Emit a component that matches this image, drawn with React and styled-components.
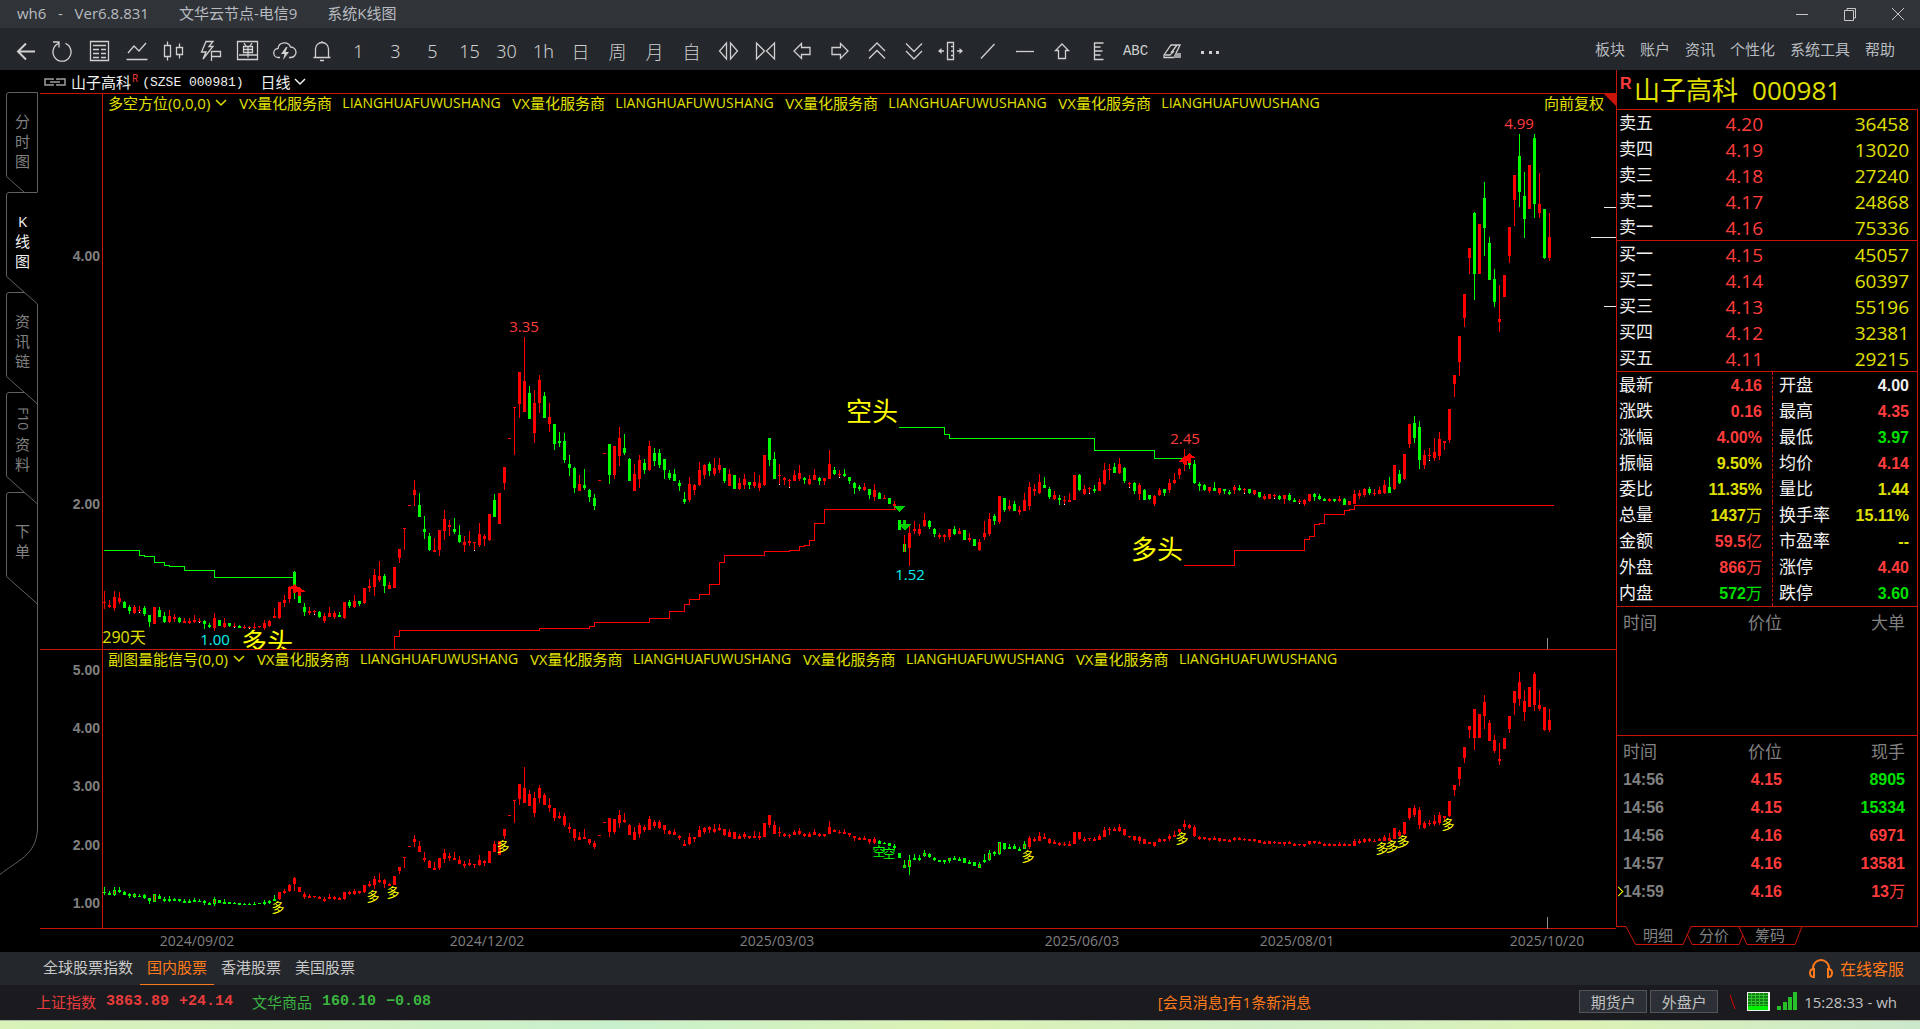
import styled, { createGlobalStyle, css } from "styled-components";

const cjk = `"Noto Sans CJK SC", sans-serif`;
const uiFont = `"Open Sans", ${cjk}`;
const boldFont = `"Liberation Sans", ${cjk}`;
const monoFont = `"Liberation Mono", ${cjk}`;

const color = {
  line: "#c8140a",
  red: "#ff3c3c",
  green: "#00e000",
  yellow: "#e0e000",
  white: "#f0f0f0",
  gray: "#808080",
  orange: "#ff7a1a",
};

const GlobalStyle = createGlobalStyle`
  *{
    box-sizing:border-box;
  }
  body{
    margin:0;
    background:#000;
    color:#f0f0f0;
    font-family:${uiFont};
    font-size:15px;
  }
  button{
    border:0;
    padding:0;
    background:none;
    color:inherit;
    font:inherit;
    cursor:pointer;
  }
  a{
    color:inherit;
    text-decoration:none;
  }
`;

/* ---------- data ---------- */

// high, body top, body bottom, low, kind (r up, g down, w flat, h hollow)
const candleText = `
591 602 603 609 r,600 605 607 608 r,591 597 608 611 r,592 598 602 604 r,601 602 608 608 g
605 607 611 614 g,605 607 613 614 r,606 610 611 613 w,606 608 614 616 g,615 615 622 627 g
607 607 624 624 r,607 610 617 617 g,612 616 622 623 g,610 616 622 623 r,614 617 619 622 r
617 618 622 623 g,618 621 623 623 r,618 621 623 624 r,615 620 622 623 r,618 621 622 623 w
620 621 624 629 g,623 625 627 628 g,613 618 628 631 r,620 620 626 626 g,618 623 627 628 r
623 623 626 627 g,623 626 627 628 w,625 626 628 628 g,625 627 628 629 r,626 627 628 629 w
623 627 628 629 r,626 626 627 628 r,620 623 628 630 r,620 621 626 627 r,608 616 618 618 r
602 602 618 619 r,595 600 603 607 r,586 587 599 603 r,571 572 585 599 g,591 592 603 603 g
603 607 612 616 g,607 611 613 615 r,610 611 612 615 w,611 612 617 618 g,613 616 621 623 r
607 613 617 617 r,611 613 617 619 r,612 615 617 617 g,602 602 618 619 r,600 602 606 608 g
595 601 607 608 r,601 601 604 606 g,588 588 603 604 r,579 586 588 592 r,569 575 587 596 r
561 576 580 582 r,574 576 586 593 g,582 585 589 589 r,567 567 588 588 r,549 549 558 563 r
528 528 529 550 r,505 505 506 506 r,480 490 495 506 r,493 505 517 517 g,516 529 532 539 g
533 536 550 551 g,538 550 552 552 r,530 530 550 556 r,510 519 531 540 r,520 525 527 536 r
518 529 532 534 g,525 535 542 543 g,536 542 545 552 r,531 541 543 546 r,542 542 543 551 w
523 534 545 547 r,534 536 539 546 r,514 514 540 541 r,494 500 517 517 g,493 493 524 524 r
467 467 483 490 r,438 438 439 439 r,407 407 408 455 r,372 372 404 418 r,337 381 412 412 r
386 393 419 419 g,390 403 433 443 r,375 380 403 413 r,392 396 418 418 g,403 417 424 432 r
424 424 444 450 g,432 441 443 447 g,433 441 460 463 g,455 464 468 476 g,467 468 488 493 g
475 484 491 491 r,469 485 488 490 g,489 490 497 502 g,494 498 506 510 g,480 480 481 481 r
453 453 454 454 r,444 444 475 484 g,446 446 475 479 r,427 438 456 466 r,434 448 453 455 g
458 459 481 481 g,464 474 491 491 r,455 460 479 488 r,459 463 470 474 g,441 446 470 471 r
448 453 461 466 g,449 453 465 468 g,459 459 470 479 g,470 473 478 480 g,469 474 481 481 g
480 483 486 491 g,492 499 502 504 g,477 484 500 502 r,484 485 490 495 r,462 470 485 486 r
464 465 475 479 r,462 464 471 476 g,458 468 474 476 r,458 465 470 473 r,468 468 481 483 g
469 474 486 486 r,475 475 489 489 g,478 483 489 490 r,474 479 485 489 r,482 482 485 489 g
472 482 486 488 r,475 483 488 491 r,455 455 485 486 r,438 438 460 466 g,452 459 479 479 g
464 475 476 485 w,477 478 480 485 r,479 480 481 488 w,470 475 481 481 r,465 473 479 481 r
477 478 480 484 g,475 479 484 485 r,469 475 480 480 r,477 478 481 485 g,478 478 481 485 r
450 464 479 479 r,467 470 474 475 g,470 474 475 478 w,469 474 476 477 g,477 477 481 484 g
482 483 488 494 g,485 487 489 491 g,483 487 490 491 r,489 489 495 499 g,484 490 497 501 r
492 493 499 499 g,495 498 499 499 r,498 498 504 504 g,501 504 506 510 r,520 520 530 530 g
535 544 552 552 h,524 533 548 566 r,521 529 531 534 r,524 529 534 536 r,513 520 526 527 r
520 521 527 529 g,528 529 534 537 g,533 535 537 539 r,534 535 537 542 r,529 529 537 540 r
526 529 534 535 g,528 531 534 534 r,530 530 540 540 g,533 538 540 542 r,539 539 546 546 g
539 542 550 551 r,521 533 537 540 r,513 519 534 536 r,514 516 521 525 g,496 496 522 524 r
498 498 510 512 g,500 506 509 511 r,501 504 511 511 g,506 510 512 515 r,493 500 511 511 r
482 487 506 510 r,484 489 491 496 r,474 482 493 494 r,477 485 488 488 g,487 489 497 499 g
491 495 499 500 r,495 498 500 505 g,496 500 501 505 w,493 500 502 502 r,475 475 500 500 r
474 475 490 491 g,485 489 494 495 r,487 488 489 494 w,485 489 491 493 g,478 482 491 491 r
463 470 484 485 r,464 469 470 480 r,463 467 473 473 g,458 464 473 474 r,467 468 481 483 g
482 483 484 488 w,482 483 491 494 g,483 485 494 500 r,489 490 500 500 g,495 495 499 500 g
495 496 504 506 r,488 490 495 496 r,489 489 493 496 g,479 483 490 493 r,473 480 483 484 r
468 469 475 479 r,449 458 464 471 r,458 460 465 469 g,460 464 483 484 g,482 484 486 491 g
484 485 490 491 g,487 487 491 493 r,482 488 491 491 g,488 488 493 495 r,489 489 491 494 g
490 492 494 495 g,485 487 490 494 r,485 488 490 491 g,488 489 490 494 w,489 489 493 494 g
490 490 494 495 r,492 492 497 498 g,494 496 499 500 r,494 494 499 499 r,494 495 496 499 w
495 496 499 500 g,495 495 499 504 r,493 495 500 501 g,498 500 502 502 g,499 501 502 504 w
499 500 504 506 r,494 494 501 502 r,493 494 497 501 g,494 496 499 500 g,498 499 501 501 g
498 499 501 502 r,499 499 501 502 g,496 499 501 502 r,498 499 505 505 g,501 501 505 505 r
490 494 504 504 r,490 493 496 499 r,488 489 495 497 r,487 489 493 495 g,489 493 494 496 r
487 490 494 494 r,480 485 493 494 r,477 487 493 493 g,465 465 489 490 r,470 474 483 484 g
454 454 479 480 r,424 424 444 448 r,416 423 438 443 g,421 427 460 469 g,450 455 465 469 r
448 455 456 461 w,438 452 458 461 r,432 439 456 460 r,441 441 443 450 r,409 409 440 443 r
375 375 384 397 r,336 336 362 376 r,294 294 318 327 r,248 248 258 274 r,212 213 274 300 g
224 224 274 274 r,182 198 228 256 g,237 243 280 280 g,269 279 302 307 g,285 319 322 332 r
275 275 297 297 r,227 227 256 263 r,175 175 200 226 r,134 156 192 207 g,172 196 219 238 g
165 165 209 209 r,134 138 204 218 g,173 204 213 218 r,209 209 258 259 g,213 237 258 261 r
`;

const candles = candleText.trim().split(/[\n,]/).map((row) => {
  const [high, top, bottom, low, kind] = row.split(" ");
  return { high: +high, top: +top, bottom: +bottom, low: +low, kind };
});

const tools = [
  { icon: "back", name: "返回" },
  { icon: "refresh", name: "刷新" },
  { icon: "list", name: "报价列表" },
  { icon: "trend", name: "分时走势" },
  { icon: "candle", name: "K线" },
  { icon: "flash", name: "闪电下单" },
  { icon: "order", name: "下单" },
  { icon: "cloud", name: "云条件单" },
  { icon: "bell", name: "预警" },
  { text: "1" }, { text: "3" }, { text: "5" }, { text: "15" }, { text: "30" }, { text: "1h" },
  { text: "日" }, { text: "周" }, { text: "月" }, { text: "自" },
  { icon: "widen", name: "放大" },
  { icon: "narrow", name: "缩小" },
  { icon: "left", name: "左移" },
  { icon: "right", name: "右移" },
  { icon: "up2", name: "上翻" },
  { icon: "down2", name: "下翻" },
  { icon: "spread", name: "间距" },
  { icon: "slash", name: "斜线" },
  { icon: "dash", name: "水平线" },
  { icon: "arrowUp", name: "箭头" },
  { icon: "ruler", name: "刻度" },
  { text: "ABC", small: true },
  { icon: "eraser", name: "擦除" },
  { icon: "more", name: "更多" },
];

const asks = [
  ["卖五", "4.20", "36458"],
  ["卖四", "4.19", "13020"],
  ["卖三", "4.18", "27240"],
  ["卖二", "4.17", "24868"],
  ["卖一", "4.16", "75336"],
];
const bids = [
  ["买一", "4.15", "45057"],
  ["买二", "4.14", "60397"],
  ["买三", "4.13", "55196"],
  ["买四", "4.12", "32381"],
  ["买五", "4.11", "29215"],
];
const stats = [
  ["最新", "4.16", "red", "开盘", "4.00", "white"],
  ["涨跌", "0.16", "red", "最高", "4.35", "red"],
  ["涨幅", "4.00%", "red", "最低", "3.97", "green"],
  ["振幅", "9.50%", "yellow", "均价", "4.14", "red"],
  ["委比", "11.35%", "yellow", "量比", "1.44", "yellow"],
  ["总量", "1437万", "yellow", "换手率", "15.11%", "yellow"],
  ["金额", "59.5亿", "red", "市盈率", "--", "yellow"],
  ["外盘", "866万", "red", "涨停", "4.40", "red"],
  ["内盘", "572万", "green", "跌停", "3.60", "green"],
];
const deals = [
  ["14:56", "4.15", "8905", "green"],
  ["14:56", "4.15", "15334", "green"],
  ["14:56", "4.16", "6971", "red"],
  ["14:57", "4.16", "13581", "red"],
  ["14:59", "4.16", "13万", "red"],
];

/* ---------- icons ---------- */

const icons = {
  back: <path d="M21 12.500H4M12 4.500l-8 8 8 8" strokeWidth="2" />,
  refresh: <path d="M7.500 4.300a9 9.300 0 1 0 7 0M2 3h6v5.500" />,
  list: (
    <>
      <path d="M2.500 2.500h18v19h-18z" />
      <path d="M5 6.500h13M5 10.500h6M13 10.500h5M5 14.500h6M13 14.500h5M5 18.500h6M13 18.500h5" />
    </>
  ),
  trend: <path d="M3 14l6-7 5 5 7-8M1.500 20.500h21" />,
  candle: <path d="M2.500 6.500h6v11h-6zM5.500 2.500v4M5.500 17.500v4M14.500 8.500h6v7h-6zM17.500 4.500v4M17.500 15.500v4" />,
  flash: <path d="M7 2.500h7l-4 5h4L4 20l3-7H2.500zM12.500 12v10M12.500 12.500h9v5h-9" />,
  order: <path d="M1.500 2.500h20v18h-20zM8 4l2 3M16 4l-2 3M7.500 7.500h9v6h-9zM7.500 10.500h9M12 7.500v11M3 16h18" />,
  cloud: (
    <>
      <path d="M7 18.500H5.500a4.500 4.500 0 0 1-.5-9 6.500 6.500 0 0 1 12.500-1.500 5 5 0 0 1 .5 10.500h-2" />
      <path d="M13 8l-5 7h3.500l-1.500 6 6-8h-3.500l2-5z" fill="#d0d0d0" stroke="none" />
    </>
  ),
  bell: <path d="M5.500 18V10a6.500 6.500 0 0 1 13 0v8M3.500 18.500h17M10 21.500h4M12 2v1.500" />,
  widen: <path d="M9.500 4v16L2.500 12zM13.500 4v16l7-8z" />,
  narrow: <path d="M2.500 4v16l8-8zM20.500 4v16l-8-8z" />,
  left: <path d="M10.500 4.500L3 12l7.500 7.500v-4h8.500v-7h-8.500z" />,
  right: <path d="M12.500 4.500L20 12l-7.500 7.500v-4H4v-7h8.500z" />,
  up2: <path d="M4 12l8-8 8 8M4 19.500l8-8 8 8" />,
  down2: <path d="M4 4.500l8 8 8-8M4 12l8 8 8-8" />,
  spread: (
    <>
      <path d="M8.500 3.500h6v17h-6zM12 7.500h2.500M12 12h2.500M12 16.500h2.500M0 12h5M18 12h5" />
      <path d="M-1 12l3.500-3v6zM24 12l-3.500-3v6z" fill="#d0d0d0" stroke="none" />
    </>
  ),
  slash: <path d="M5 19.500L18.500 5" />,
  dash: <path d="M3 12.500h18" />,
  arrowUp: <path d="M12 5l-6.500 6.500h3v8h7v-8h3z" />,
  ruler: <path d="M16.500 4H7.500v16.500h9M7.500 8h6M7.500 12h8M7.500 16h6" />,
  eraser: (
    <>
      <path d="M3 16L10 6h9l-6 12.500H3zM10 14l6-8M4 16h5l4-4" />
      <path d="M12 19h8v-5h-5z" fill="#a0a0a0" stroke="none" />
    </>
  ),
  more: <path d="M3 12h3v3H3zM11 12h3v3h-3zM18 12h3v3h-3z" fill="#d0d0d0" stroke="none" />,
};

const ToolIcon = ({ name }) => (
  <svg width="24" height="24" viewBox="0 0 24 24" fill="none" stroke="#d0d0d0" strokeWidth="1.300" overflow="visible" aria-hidden="true">
    {icons[name]}
  </svg>
);

const Chevron = ({ stroke }) => (
  <svg width="12" height="8" viewBox="0 0 12 8" fill="none" stroke={stroke} strokeWidth="1.500" aria-hidden="true">
    <path d="M1 1l5 5 5-5" />
  </svg>
);

/* ---------- chart ---------- */

const MAIN_TOP = 113;
const SUB_TOP = 669;
const X0 = 64;
const STEP = 5;

// the lower pane shows the same series at a smaller scale
const toSub = (v) => Math.round(672 + (v - 134) * 0.47);
const inShort = (i) => i <= 34 || (i >= 155 && i <= 184);

const MainCandle = ({ x, c }) => {
  const wick = c.kind === "g" ? "#0f0" : "#f00";
  return (
    <g>
      <rect x={x - 1} y={c.top} width="3" height={c.bottom - c.top} fill={c.kind === "h" ? "#0f0" : wick} />
      <rect x={x} y={c.high} width="1" height={c.low - c.high} fill={wick} />
      {c.kind === "w" && <rect x={x} y={c.low - 1} width="1" height="1" fill="#fff" />}
    </g>
  );
};

const SubCandle = ({ x, c, short }) => {
  const top = toSub(c.top);
  const bottom = Math.max(toSub(c.bottom), top + (c.bottom - c.top > 1 ? 2 : 1));
  const high = toSub(c.high);
  const low = Math.max(toSub(c.low), bottom);
  const tone = short ? "#0f0" : "#f00";
  return (
    <g fill={tone}>
      <rect x={x} y={high} width="1" height={low - high} />
      <rect x={x - 1} y={top} width="3" height={bottom - top} />
      {short && c.kind !== "g" && bottom - top > 2 && (
        <rect x={x} y={top + 1} width="1" height={bottom - top - 2} fill="#f00" />
      )}
    </g>
  );
};

const MainChart = () => (
  <MainSvg role="img" aria-label="山子高科 日线">
    <g transform={`translate(-40 ${-MAIN_TOP})`}>
      <rect x="102" y="100" width="1" height="560" fill={color.line} />
      <AxisText x="100" y="256">4.00</AxisText>
      <AxisText x="100" y="504">2.00</AxisText>
      <g shapeRendering="crispEdges">
        {candles.map((c, i) => (
          <MainCandle key={i} x={40 + X0 + i * STEP} c={c} />
        ))}
        <TrendLine $up d="M104 550.500H139.500V555.500H144.500V556.500H154.500V562.500H164.500V565.500H169.500V566.500H184.500V570.500H214.500V577.500H294" />
        <TrendLine d="M394.500 650V636.500H399.500V630.500H539.500V628.500H589.500V626.500H594.500V622.500H649.500V618.500H669.500V611.500H684.500V604.500H689.500V599.500H699.500V594.500H709.500V584.500H719.500V562.500H724.500V555.500H764.500V551.500H789.500V550.500H799.500V546.500H804.500V545.500H809.500V540.500H814.500V523.500H824.500V509.500H896" />
        <TrendLine $up d="M899 427.500H944.500V434.500H949.500V438.500H1094.500V450.500H1154.500V458.500H1182" />
        <TrendLine d="M1184 565.500H1234.500V550.500H1304.500V539.500H1309.500V536.500H1314.500V524.500H1319.500V523.500H1324.500V514.500H1344.500V510.500H1349.500V509.500H1354.500V505.500H1554" />
        <path d="M294.500 584l6 5h-5v4h-3v-4h-4zM299.500 587l6 5h-5v4h-3v-4h-4zM1189.500 453l6 5h-5v5h-3v-4h-5zM1184.500 456l6 5h-4v4h-3v-3h-5z" fill="#f00" />
        <path d="M893 506h12l-6 6zM898 524h5v-4h3v4h5l-6 6z" fill="#00d000" />
        <path d="M1604 207.500h12M1591 237.500h25M1604 306.500h12" stroke="#e8e8e8" />
        <path d="M1547.500 638v12" stroke="#909090" />
      </g>
      <ChartText x="524" y="326" fill={color.red}>3.35</ChartText>
      <ChartText x="1519" y="123" fill={color.red}>4.99</ChartText>
      <ChartText x="1185" y="438" fill={color.red}>2.45</ChartText>
      <ChartText x="910" y="574" fill="#00f0f0">1.52</ChartText>
      <ChartText x="215" y="639" fill="#00f0f0">1.00</ChartText>
      <ChartText x="124" y="637" fill={color.yellow} $size={16}>290天</ChartText>
      <ChartText x="872" y="411" fill="#ff0" $size={26}>空头</ChartText>
      <ChartText x="1157" y="549" fill="#ff0" $size={26}>多头</ChartText>
      <ChartText x="267" y="642" fill="#ff0" $size={26}>多头</ChartText>
    </g>
  </MainSvg>
);

const longMarks = [[278, 907], [373, 896], [393, 892], [503, 846], [1028, 856], [1182, 838], [1382, 848], [1392, 846], [1403, 841], [1448, 824]];
const shortMarks = [[879, 851], [889, 853]];
const subLevels = [["5.00", 670], ["4.00", 728], ["3.00", 786], ["2.00", 845], ["1.00", 903]];
const dates = [["2024/09/02", 197], ["2024/12/02", 487], ["2025/03/03", 777], ["2025/06/03", 1082], ["2025/08/01", 1297], ["2025/10/20", 1547]];

const SubChart = () => (
  <SubSvg role="img" aria-label="副图量能信号">
    <g transform={`translate(-40 ${-SUB_TOP})`}>
      <rect x="102" y="669" width="1" height="260" fill={color.line} />
      {subLevels.map(([label, y]) => (
        <AxisText key={label} x="100" y={y}>{label}</AxisText>
      ))}
      <g shapeRendering="crispEdges">
        {candles.map((c, i) => (
          <SubCandle key={i} x={40 + X0 + i * STEP} c={c} short={inShort(i)} />
        ))}
        <path d="M1547.500 917v12" stroke="#909090" />
      </g>
      {longMarks.map(([x, y]) => (
        <ChartText key={x} x={x} y={y} fill="#ff0" $size={13}>多</ChartText>
      ))}
      {shortMarks.map(([x, y]) => (
        <ChartText key={x} x={x} y={y} fill="#0f0" $size={13}>空</ChartText>
      ))}
    </g>
  </SubSvg>
);

const Pane = ({ title, children, right }) => (
  <PaneBox>
    <PaneHead>
      <PaneTitle>
        {title}
        <Chevron stroke={color.yellow} />
      </PaneTitle>
      {[0, 1, 2, 3].map((n) => (
        <Promo key={n}>
          <span>VX量化服务商</span>
          <PromoLatin>LIANGHUAFUWUSHANG</PromoLatin>
        </Promo>
      ))}
      {right}
    </PaneHead>
    {children}
  </PaneBox>
);

/* ---------- side bars ---------- */

const SideTabs = () => (
  <Side>
    <SideLines width="40" height="882" aria-hidden="true">
      <g transform="translate(0 -70)" fill="none" stroke="#606060">
        <path d="M37.500 192V92.500H9q-2.500 0-2.500 2.500V176.500L24 192" />
        <path d="M37.500 192.500H9q-2.500 0-2.500 2.500V276.500L37.500 304V830c-2 26-20 30-38 45" />
        <path d="M24 292.500H9q-2.500 0-2.500 2.500V376.500L37.500 404" />
        <path d="M24 392.500H9q-2.500 0-2.500 2.500V476.500L37.500 504" />
        <path d="M24 492.500H9q-2.500 0-2.500 2.500V576.500L37.500 604" />
      </g>
    </SideLines>
    <SideTab><i>分</i><i>时</i><i>图</i></SideTab>
    <SideTab $active><i>K</i><i>线</i><i>图</i></SideTab>
    <SideTab><i>资</i><i>讯</i><i>链</i></SideTab>
    <SideTab><SideLatin>F10</SideLatin><i>资</i><i>料</i></SideTab>
    <SideTab><i>下</i><i>单</i></SideTab>
  </Side>
);

// digits are bold, the unit behind them is not
const Amount = ({ value }) => {
  const unit = /[万亿]$/.test(value) ? value.slice(-1) : "";
  return (
    <>
      {unit ? value.slice(0, -1) : value}
      {unit && <Unit>{unit}</Unit>}
    </>
  );
};

const Book = ({ rows, label }) => (
  <Table aria-label={label}>
    <tbody>
      {rows.map(([name, price, size]) => (
        <tr key={name}>
          <NameCell $w={50}>{name}</NameCell>
          <BookCell $c="red" $w={96}>{price}</BookCell>
          <BookCell $c="yellow" $end>{size}</BookCell>
        </tr>
      ))}
    </tbody>
  </Table>
);

const DealHead = ({ last }) => (
  <thead>
    <tr>
      <th>时间</th>
      <th>价位</th>
      <th>{last}</th>
    </tr>
  </thead>
);

const Quote = () => (
  <QuotePanel>
    <QuoteTitle>
      <sup>R</sup>
      <span>山子高科</span>
      <span>000981</span>
    </QuoteTitle>
    <QuoteBody>
      <Block><Book rows={asks} label="卖盘" /></Block>
      <Block><Book rows={bids} label="买盘" /></Block>
      <Block>
        <Table>
          <tbody>
            {stats.map(([a, av, ac, b, bv, bc]) => (
              <tr key={a}>
                <NameCell $w={50}>{a}</NameCell>
                <StatCell $c={ac} $w={106} $split><Amount value={av} /></StatCell>
                <NameCell $w={60} $indent>{b}</NameCell>
                <StatCell $c={bc} $end>{bv}</StatCell>
              </tr>
            ))}
          </tbody>
        </Table>
      </Block>
      <Block $h={129}>
        <DealTable><DealHead last="大单" /></DealTable>
      </Block>
      <Block $h={192}>
        <DealTable>
          <DealHead last="现手" />
          <tbody>
            {deals.map(([time, price, size, c], n) => (
              <tr key={n}>
                <DealCell $c="gray">
                  {n === deals.length - 1 && <Mark />}
                  {time}
                </DealCell>
                <DealCell $c="red">{price}</DealCell>
                <DealCell $c={c}><Amount value={size} /></DealCell>
              </tr>
            ))}
          </tbody>
        </DealTable>
      </Block>
    </QuoteBody>
    <QuoteTabs>
      <svg width="304" height="20" fill="none" stroke={color.line} aria-hidden="true">
        <path d="M0 .5H10L19.500 18.500H67L75 .5H301M71 8L76 18.500H123L127 9M123 1L131 18.500H179L186 .5" />
      </svg>
      <button>明细</button>
      <button>分价</button>
      <button>筹码</button>
    </QuoteTabs>
  </QuotePanel>
);

const App = () => (
  <Page>
    <GlobalStyle />
    <TitleBar>
      <TitleText>
        <span>wh6&nbsp;&nbsp; -&nbsp;&nbsp; Ver6.8.831</span>
        <span>文华云节点-电信9</span>
        <span>系统K线图</span>
      </TitleText>
      <WindowButtons>
        <button aria-label="最小化"><svg width="14" height="14" fill="none" stroke="#c8c8c8"><path d="M1 7.500h12" /></svg></button>
        <button aria-label="还原"><svg width="14" height="14" fill="none" stroke="#c8c8c8"><path d="M1.500 3.500h9v10h-9zM4 3V1.500h8.500V11H11" /></svg></button>
        <button aria-label="关闭"><svg width="14" height="14" fill="none" stroke="#c8c8c8"><path d="M1 1l12 12M13 1L1 13" /></svg></button>
      </WindowButtons>
    </TitleBar>
    <ToolBar>
      {tools.map((t) => (
        <Tool key={t.text || t.icon} aria-label={t.name} $small={t.small}>
          {t.icon ? <ToolIcon name={t.icon} /> : t.text}
        </Tool>
      ))}
      <Menu>
        {["板块", "账户", "资讯", "个性化", "系统工具", "帮助"].map((m) => (
          <a href="#" key={m}>{m}</a>
        ))}
      </Menu>
    </ToolBar>
    <Main>
      <SideTabs />
      <Charts>
        <SymbolBar>
          <svg width="22" height="10" fill="none" stroke="#a0a0a0" strokeWidth="1.500" aria-hidden="true">
            <path d="M9 3V2H1v6h8V7M13 3V2h8v6h-8V7M6 5h10" />
          </svg>
          <SymbolName>山子高科<sup>R</sup></SymbolName>
          <Code>(SZSE 000981)</Code>
          <Period>日线<Chevron stroke="#f0f0f0" /></Period>
        </SymbolBar>
        <Pane title="多空方位(0,0,0)" right={<Adjust>向前复权</Adjust>}>
          <Corner />
          <MainChart />
        </Pane>
        <Pane title="副图量能信号(0,0)">
          <SubChart />
        </Pane>
        <DateSvg>
          {dates.map(([d, x]) => (
            <ChartText key={d} x={x - 40} y="11" fill={color.gray} $size={14}>{d}</ChartText>
          ))}
        </DateSvg>
      </Charts>
      <Quote />
    </Main>
    <MarketBar>
      <MarketTab href="#">全球股票指数</MarketTab>
      <MarketTab href="#" $active>国内股票</MarketTab>
      <MarketTab href="#">香港股票</MarketTab>
      <MarketTab href="#">美国股票</MarketTab>
      <Service href="#">
        <svg width="26" height="20" fill="none" stroke={color.orange} strokeWidth="2" aria-hidden="true">
          <path d="M5 11V9a8 8 0 0 1 16 0v2M6 10v8q-4 0-4-4t4-4zM20 10v8q4 0 4-4t-4-4z" />
        </svg>
        在线客服
      </Service>
    </MarketBar>
    <StatusBar>
      <Index $c="#e83c3c"><span>上证指数</span><b>3863.89</b><b>+24.14</b></Index>
      <Index $c="#3cb440"><span>文华商品</span><b>160.10</b><b>−0.08</b></Index>
      <News href="#">[会员消息]有1条新消息</News>
      <StatusRight>
        <Account>期货户</Account>
        <Account>外盘户</Account>
        <svg width="83" height="22" viewBox="3 0 83 22" aria-hidden="true">
          <path d="M12 4l5 14" stroke="#e00000" fill="none" />
          <rect x="29" y="1" width="23" height="19" fill="#f0f0f0" />
          <rect x="30" y="2" width="20" height="13" fill="#108010" />
          <path d="M30 4.500h20M30 7.500h20M30 10.500h20M30 13.500h20M33.500 2v13M37.500 2v13M41.500 2v13M45.500 2v13" stroke="#30c030" />
          <rect x="30" y="15" width="20" height="4" fill="#00f000" />
          <path d="M59 15h4v4h-4zM65 11h4v8h-4zM70 6h4v13h-4zM75 1h4v18h-4z" fill="#28c028" />
        </svg>
        <span>15:28:33 - wh</span>
      </StatusRight>
    </StatusBar>
    <Desktop>
      <svg width="100%" height="8" aria-hidden="true">
        <circle cx="48" cy="14" r="8" fill="#d03020" />
        <rect x="1132" y="4" width="48" height="20" rx="4" fill="#effae4" />
      </svg>
    </Desktop>
  </Page>
);

/* ---------- styles ---------- */

const Page = styled.div`
  display:flex;
  flex-direction:column;
  min-height:100vh;
  overflow:hidden;
`;

const TitleBar = styled.header`
  display:flex;
  justify-content:space-between;
  align-items:center;
  height:28px;
  padding:0 9px 0 17px;
  background:#303338;
  color:#b8bcc0;
`;

const TitleText = styled.div`
  display:flex;
  gap:30px;
  padding-bottom:2px;
  line-height:20px;
`;

const WindowButtons = styled.div`
  display:flex;
  button{
    display:flex;
    align-items:center;
    justify-content:center;
    width:48px;
    height:28px;
  }
  button:last-child{
    width:26px;
    margin-left:11px;
  }
`;

const ToolBar = styled.nav`
  display:flex;
  align-items:center;
  height:42px;
  padding:0 25px 0 7px;
  background:#24272b;
  color:#d0d0d0;
`;

const Tool = styled.button`
  display:flex;
  align-items:center;
  justify-content:center;
  width:37px;
  height:42px;
  padding-top:3px;
  font-family:"Noto Sans", ${cjk};
  font-weight:300;
  font-size:18px;
  ${(p) => p.$small && css`
    font-family:${monoFont};
    font-size:14px;
  `}
`;

const Menu = styled.div`
  display:flex;
  gap:15px;
  margin-left:auto;
  padding-bottom:2px;
  color:#b8bcc0;
  white-space:nowrap;
`;

const Main = styled.main`
  display:flex;
`;

const Side = styled.nav`
  position:relative;
  display:flex;
  flex-direction:column;
  width:40px;
  padding-top:22px;
`;

const SideLines = styled.svg`
  position:absolute;
  top:0;
  left:0;
`;

const SideTab = styled.button`
  position:relative;
  display:flex;
  flex-direction:column;
  align-items:center;
  justify-content:center;
  width:45px;
  height:100px;
  padding-bottom:3px;
  line-height:20px;
  color:${(p) => (p.$active ? color.white : color.gray)};
  i{
    font-style:normal;
  }
`;

const SideLatin = styled.span`
  writing-mode:vertical-rl;
  margin-bottom:4px;
  font-size:14px;
`;

const Charts = styled.section`
  flex:1;
  min-width:0;
`;

const SymbolBar = styled.div`
  display:flex;
  align-items:center;
  height:23px;
  padding-left:4px;
`;

const SymbolName = styled.span`
  padding-left:5px;
  line-height:20px;
  sup{
    color:${color.red};
    font-size:10px;
    line-height:10px;
    padding-left:1px;
  }
`;

const Code = styled.span`
  padding:1px 0 0 4px;
  font-family:${monoFont};
  font-size:13px;
`;

const Period = styled.button`
  display:flex;
  align-items:center;
  gap:3px;
  margin-left:17px;
  line-height:20px;
`;

const PaneBox = styled.div`
  position:relative;
  border-top:1px solid ${color.line};
`;

const PaneHead = styled.div`
  display:flex;
  align-items:center;
  height:19px;
  margin-left:62px;
  padding:0 12px 2px 5px;
  border-left:1px solid ${color.line};
  color:${color.yellow};
  line-height:18px;
  white-space:nowrap;
`;

const PaneTitle = styled.button`
  display:flex;
  align-items:center;
  gap:5px;
  margin-right:12px;
`;

const Promo = styled.span`
  display:flex;
  width:273px;
  span:first-child{
    width:103px;
  }
`;

const PromoLatin = styled.span`
  font-size:14px;
`;

const Adjust = styled.button`
  margin-left:auto;
`;

const Corner = styled.i`
  position:absolute;
  top:0;
  right:0;
  border-top:12px solid ${color.line};
  border-left:12px solid transparent;
`;

const MainSvg = styled.svg`
  display:block;
  width:100%;
  height:536px;
`;

const SubSvg = styled.svg`
  display:block;
  width:100%;
  height:259px;
  overflow:visible;
`;

const DateSvg = styled.svg`
  display:block;
  width:100%;
  height:24px;
  border-top:1px solid ${color.line};
`;

const TrendLine = styled.path`
  fill:none;
  stroke:${(p) => (p.$up ? "#0f0" : "#f00")};
`;

const AxisText = styled.text`
  fill:${color.gray};
  font:bold 14px ${boldFont};
  text-anchor:end;
  dominant-baseline:central;
`;

const ChartText = styled.text`
  font-size:${(p) => p.$size || 15}px;
  text-anchor:middle;
  dominant-baseline:central;
`;

const QuotePanel = styled.aside`
  width:304px;
`;

const QuoteTitle = styled.h1`
  display:flex;
  align-items:center;
  height:39px;
  margin:0;
  padding-left:3px;
  border-left:1px solid ${color.line};
  color:${color.yellow};
  font-weight:400;
  font-size:26px;
  line-height:36px;
  sup{
    align-self:flex-start;
    width:14px;
    color:${color.red};
    font:bold 16px/28px ${boldFont};
  }
  span + span{
    margin-left:14px;
  }
`;

const QuoteBody = styled.div`
  width:302px;
  border:1px solid ${color.line};
  border-bottom:0;
`;

const Block = styled.div`
  height:${(p) => (p.$h ? p.$h + "px" : "auto")};
  & + &{
    border-top:1px solid ${color.line};
  }
`;

const Table = styled.table`
  width:100%;
  table-layout:fixed;
  border-spacing:0;
  td, th{
    height:26px;
    padding:0;
    line-height:24px;
    white-space:nowrap;
  }
  td{
    padding-top:2px;
  }
`;

const NameCell = styled.th`
  width:${(p) => p.$w}px;
  font-size:17px;
  font-weight:400;
  text-align:left;
  && {
    padding-left:${(p) => (p.$indent ? 6 : 2)}px;
  }
`;

const BookCell = styled.td`
  width:${(p) => (p.$w ? p.$w + "px" : "auto")};
  color:${(p) => color[p.$c]};
  font-size:19px;
  text-align:right;
  && {
    padding-right:${(p) => (p.$end ? 8 : 0)}px;
  }
`;

const StatCell = styled.td`
  width:${(p) => (p.$w ? p.$w + "px" : "auto")};
  color:${(p) => color[p.$c]};
  border-right:${(p) => (p.$split ? `1px dashed ${color.line}` : 0)};
  font:bold 16px ${boldFont};
  text-align:right;
  && {
    padding-right:${(p) => (p.$end ? 8 : 10)}px;
  }
`;

const Unit = styled.span`
  font-weight:400;
`;

const DealTable = styled.table`
  width:100%;
  table-layout:fixed;
  border-spacing:0;
  th{
    height:30px;
    padding:2px 0 0;
    color:${color.gray};
    font-size:17px;
    font-weight:400;
    line-height:26px;
    text-align:right;
  }
  th:first-child, td:first-child{
    width:80px;
    padding-left:6px;
    text-align:left;
  }
  th:nth-child(2){
    width:85px;
  }
  th:last-child, td:last-child{
    padding-right:12px;
  }
`;

const DealCell = styled.td`
  position:relative;
  height:28px;
  padding:0;
  color:${(p) => color[p.$c]};
  font:bold 16px/20px ${boldFont};
  text-align:right;
`;

const Mark = styled.i`
  position:absolute;
  left:-2px;
  top:10px;
  width:7px;
  height:7px;
  border-top:1px solid #ff0;
  border-right:1px solid #ff0;
  transform:rotate(45deg);
`;

const QuoteTabs = styled.div`
  position:relative;
  display:flex;
  padding-left:26px;
  color:${color.gray};
  svg{
    position:absolute;
    left:0;
    top:-1px;
  }
  button{
    position:relative;
    width:56px;
    padding-right:24px;
    white-space:nowrap;
    line-height:16px;
  }
`;

const MarketBar = styled.nav`
  display:flex;
  height:33px;
  padding:0 16px 0 36px;
  background:#24272b;
  color:#c8c8c8;
`;

const MarketTab = styled.a`
  padding:0 7px;
  line-height:30px;
  border-bottom:1px solid transparent;
  ${(p) => p.$active && css`
    color:${color.orange};
    border-color:${color.orange};
  `}
`;

const Service = styled.a`
  display:flex;
  align-items:center;
  gap:6px;
  margin-left:auto;
  color:${color.orange};
  font-size:16px;
  line-height:30px;
`;

const StatusBar = styled.footer`
  display:flex;
  align-items:center;
  height:35px;
  padding:0 23px 2px 36px;
  background:#1a1a1f;
  color:#c0c0c0;
`;

const Index = styled.div`
  display:flex;
  align-items:center;
  gap:10px;
  margin-right:19px;
  color:${(p) => p.$c};
  font-family:${monoFont};
`;

const News = styled.a`
  margin-left:auto;
  color:${color.orange};
`;

const StatusRight = styled.div`
  display:flex;
  align-items:center;
  margin-left:268px;
  white-space:nowrap;
`;

const Account = styled.button`
  width:68px;
  height:23px;
  margin-right:3px;
  border:1px solid #50555c;
  background:#2c3036;
  line-height:20px;
`;

const Desktop = styled.div`
  height:9px;
  border-top:1px solid #a8b8a0;
  background:linear-gradient(90deg, #d8f2b8, #d4f0c0 15%, #c8f0cc 32%, #dcf2b4 50%, #d0eec8 66%, #dcf2b4 82%, #cce8cc);
  overflow:hidden;
`;

export default App;
